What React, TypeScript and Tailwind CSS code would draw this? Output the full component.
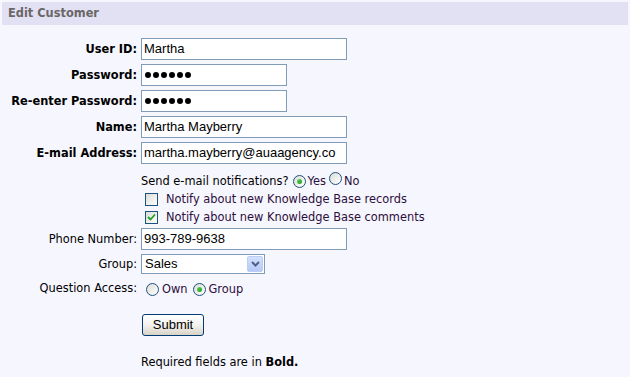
import React from "react";

const verdana = { fontFamily: '"DejaVu Sans", Verdana, sans-serif' };

function Radio({ checked }: { checked?: boolean }) {
  return (
    <span className="relative inline-flex h-[13px] w-[13px] shrink-0 items-center justify-center rounded-full border border-[#1c5180] bg-gradient-to-br from-[#dcdcd7] to-white">
      {checked && (
        <span className="h-[5px] w-[5px] rounded-full bg-gradient-to-br from-[#55d855] to-[#1f9a1f]" />
      )}
    </span>
  );
}

function Checkbox({ checked }: { checked?: boolean }) {
  return (
    <span className="relative inline-flex h-[13px] w-[13px] shrink-0 items-center justify-center border border-[#1c5180] bg-gradient-to-br from-[#dcdcd7] to-white">
      {checked && (
        <svg width="9" height="9" viewBox="0 0 9 9">
          <path d="M1 4 L3.5 6.5 L8 1.5" fill="none" stroke="#21a121" strokeWidth="1.8" />
        </svg>
      )}
    </span>
  );
}

function TextBox({ value, w }: { value: string; w: string }) {
  return (
    <div
      className={`${w} flex h-[22px] items-center border border-[#7f9db9] bg-white px-[2px] text-[13px] text-black whitespace-nowrap overflow-hidden`}
      style={{ fontFamily: '"Liberation Sans", Arial, sans-serif' }}
    >
      {value}
    </div>
  );
}

function PassBox() {
  return (
    <div className="flex h-[22px] w-[146px] items-center gap-[2px] border border-[#7f9db9] bg-white px-[3px]">
      {Array.from({ length: 6 }).map((_, i) => (
        <span key={i} className="h-[6px] w-[6px] rounded-full bg-black" />
      ))}
    </div>
  );
}

function Label({ children, bold }: { children: React.ReactNode; bold?: boolean }) {
  return (
    <div className={`flex h-[22px] items-center justify-end whitespace-nowrap pt-[2px] text-black ${bold ? "font-bold" : ""}`}>
      {children}
    </div>
  );
}

export default function App() {
  return (
    <div className="h-[377px] w-[630px] overflow-hidden bg-[#f6f6fe] pt-[2px] text-[11.4px] text-black" style={verdana}>
      <div className="mx-[2px] flex h-[23px] items-center bg-[#e1e1f3] px-[6px] font-bold text-[#6b6666]">
        Edit Customer
      </div>

      <div className="mt-[13px] grid grid-cols-[137px_1fr] gap-x-[4px] gap-y-[4px]">
        <Label bold>User ID:</Label>
        <TextBox value="Martha" w="w-[206px]" />
        <Label bold>Password:</Label>
        <PassBox />
        <Label bold>Re-enter Password:</Label>
        <PassBox />
        <Label bold>Name:</Label>
        <TextBox value="Martha Mayberry" w="w-[206px]" />
        <Label bold>E-mail Address:</Label>
        <TextBox value="martha.mayberry@auaagency.co" w="w-[206px]" />
      </div>

      <div className="ml-[141px] mt-[9px] flex h-[16px] items-center">
        <span className="pt-[2px]">Send e-mail notifications?</span>
        <span className="ml-[4px]"><Radio checked /></span>
        <span className="ml-[2px] pt-[2px] text-[#2d0f3c]">Yes</span>
        <span className="ml-[3px]"><Radio /></span>
        <span className="ml-[2px] pt-[2px] text-[#2d0f3c]">No</span>
      </div>
      <div className="ml-[145px] mt-[1px] flex h-[18px] items-center">
        <Checkbox />
        <span className="ml-[8px] pt-[1px] text-[#2d0f3c]">Notify about new Knowledge Base records</span>
      </div>
      <div className="ml-[145px] flex h-[18px] items-center">
        <Checkbox checked />
        <span className="ml-[8px] pt-[1px] text-[#2d0f3c]">Notify about new Knowledge Base comments</span>
      </div>

      <div className="mt-[2px] grid grid-cols-[137px_1fr] gap-x-[4px]">
        <Label>Phone Number:</Label>
        <TextBox value="993-789-9638" w="w-[206px]" />
      </div>

      <div className="mt-[4px] grid grid-cols-[137px_1fr] gap-x-[4px]">
        <div className="flex h-[20px] items-center justify-end pt-[1px]">Group:</div>
        <div
          className="flex h-[20px] w-[124px] items-center border border-[#7f9db9] bg-white pl-[3px] text-[13px]"
          style={{ fontFamily: '"Liberation Sans", Arial, sans-serif' }}
        >
          <span className="flex-1">Sales</span>
          <span className="m-[1px] flex h-[16px] w-[16px] items-center justify-center rounded-[2px] border border-[#b9cdf6] bg-gradient-to-b from-[#d3e0fd] to-[#b6c9f7]">
            <svg width="9" height="6" viewBox="0 0 9 6">
              <path d="M1 1 L4.5 4.5 L8 1" fill="none" stroke="#4d6185" strokeWidth="2" />
            </svg>
          </span>
        </div>
      </div>

      <div className="mt-[5px] grid grid-cols-[137px_1fr] gap-x-[4px]">
        <div className="flex h-[20px] items-center justify-end">Question Access:</div>
        <div className="flex h-[20px] items-center pl-[5px]">
          <Radio />
          <span className="ml-[3px] pt-[2px] text-[#2d0f3c]">Own</span>
          <span className="ml-[5px]"><Radio checked /></span>
          <span className="ml-[3px] pt-[2px] text-[#2d0f3c]">Group</span>
        </div>
      </div>

      <div className="ml-[142px] mt-[15px]">
        <button
          className="flex h-[22px] w-[62px] items-center justify-center rounded-[3px] border border-[#003c74] bg-gradient-to-b from-white via-[#f3f2ee] to-[#d8d3c8] text-[13px] text-black"
          style={{ fontFamily: '"Liberation Sans", Arial, sans-serif' }}
        >
          Submit
        </button>
      </div>

      <div className="ml-[141px] mt-[18px]">
        Required fields are in <b>Bold.</b>
      </div>
    </div>
  );
}
